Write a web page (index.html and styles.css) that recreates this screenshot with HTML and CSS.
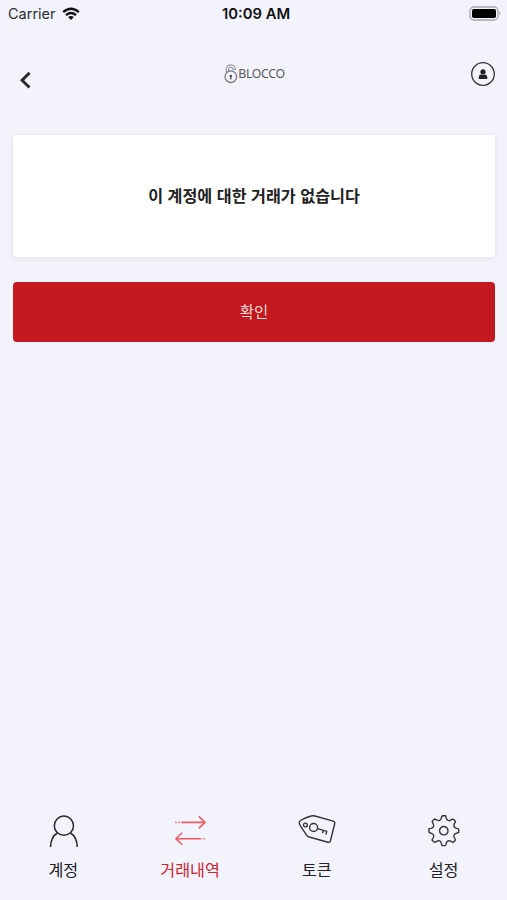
FILE: index.html
```html
<!DOCTYPE html>
<html lang="ko">
<head>
<meta charset="utf-8">
<title>BLOCCO</title>
<link rel="stylesheet" href="styles.css">
</head>
<body>
<div class="app">
  <div class="status">
    <div class="carrier"><span>Carrier</span>
      <svg width="18" height="14" viewBox="0 0 18 14" fill="none" stroke="#111" stroke-width="2.4"><path d="M1.2 5.2Q9-1.6 16.8 5.2M4 8.2Q9 3.9 14 8.2"/><path d="M9 13L6.1 10.1Q9 7.8 11.9 10.1Z" fill="#111" stroke="none"/></svg>
    </div>
    <div class="time">10:09 AM</div>
    <svg class="battery" width="33" height="16" viewBox="0 0 33 16"><rect x="1" y="1" width="28" height="13" rx="3.8" fill="#f3f3fb" stroke="#a5a5aa" stroke-width="1.3"/><rect x="3" y="3" width="24" height="9" rx="1.8" fill="#000"/><path d="M30.5 5.3q2 2.2 0 4.4z" fill="#999"/></svg>
  </div>
  <header class="header">
    <svg class="back" width="14" height="20" viewBox="0 0 14 20" fill="none" stroke="#2b2b2e" stroke-width="3"><path d="M11.5 2.9L4.1 10.2L11.5 17.5"/></svg>
    <div class="logo">
      <svg width="14" height="20" viewBox="0 0 14 20" fill="none" stroke="#77777b" stroke-width="1.3"><circle cx="6.8" cy="12.7" r="5.8"/><path d="M2.3 8.8V4.6Q2.6 .8 6.8 .8Q11 .8 11.4 4.6V5.6H9.2Q9 3.1 6.9 3.1Q4.6 3.2 4.6 5V7.2" stroke-width=".9"/><circle cx="6.8" cy="12.1" r="1.4" fill="#555" stroke="none"/><path d="M6.8 12.1V15.4" stroke="#555"/></svg>
      <span>BLOCCO</span>
    </div>
    <svg class="profile" width="26" height="26" viewBox="0 0 26 26"><circle cx="13" cy="13" r="11.3" fill="none" stroke="#333338" stroke-width="1.3"/><circle cx="13" cy="10.9" r="2.6" fill="#222"/><path d="M8.7 18V16.2Q8.7 13.8 11.2 13.6Q13 14.6 14.8 13.6Q17.3 13.8 17.3 16.2V18Z" fill="#222"/></svg>
  </header>
  <main class="content">
    <section class="card">이 계정에 대한 거래가 없습니다</section>
    <button class="confirm">확인</button>
  </main>
  <nav class="tabs">
    <a class="tab">
      <svg width="40" height="40" viewBox="0 0 40 40" fill="none" stroke="#29292c" stroke-width="1.5"><circle cx="20.9" cy="15.7" r="9.6"/><path d="M7.5 37Q8 26.7 14.3 23M27.5 23Q33.8 26.7 34.3 37"/></svg>
      <span>계정</span>
    </a>
    <a class="tab active">
      <svg width="40" height="40" viewBox="0 0 40 40" fill="none" stroke="#f25b60" stroke-width="1.6"><path d="M12 12.4H35M28.8 6.4L35 12.4L28.8 18.4M30 28.8H6M12.2 22.8L6 28.8L12.2 34.8"/><path d="M5 12.4H12M30 28.8H36.5" stroke-dasharray="2 1.2" opacity=".7"/></svg>
      <span>거래내역</span>
    </a>
    <a class="tab">
      <svg width="40" height="40" viewBox="0 0 40 40" fill="none" stroke="#343438" stroke-width="1.4" stroke-linejoin="round"><path d="M14.2 6Q16 5.5 18 6L36.2 11.2Q38.2 11.8 37.7 13.7L33.4 31Q32.9 32.8 31 32.3L12.2 27Q10.5 26.5 9.4 24.8L3.1 15.3Q1 11.9 4.3 10Q8.5 7.5 14.2 6Z"/><circle cx="8.4" cy="15" r="1.9"/><circle cx="16.6" cy="17.5" r="4"/><path d="M20.5 18.7L29.8 21.4L28.9 24.6M26.3 20.5L25.6 23.1"/></svg>
      <span>토큰</span>
    </a>
    <a class="tab">
      <svg width="40" height="40" viewBox="0 0 40 40" fill="none" stroke="#343438" stroke-width="1.4" stroke-linejoin="round">
        <defs><path id="tooth" d="M-1.8-14.9H1.8L2.6-12.2Q3.7-9.2 6.79-10.47L9.26-11.81"/></defs>
        <g transform="translate(19.8 20.7)"><use href="#tooth"/><use href="#tooth" transform="rotate(45)"/><use href="#tooth" transform="rotate(90)"/><use href="#tooth" transform="rotate(135)"/><use href="#tooth" transform="rotate(180)"/><use href="#tooth" transform="rotate(225)"/><use href="#tooth" transform="rotate(270)"/><use href="#tooth" transform="rotate(315)"/><circle r="4.2"/></g>
      </svg>
      <span>설정</span>
    </a>
  </nav>
</div>
</body>
</html>
```

FILE: styles.css
```css
* { box-sizing: border-box; }
body { margin: 0; background: #f3f3fc; font-family: "Noto Sans CJK KR", sans-serif; color: #222; }
.app { height: 900px; display: flex; flex-direction: column; }
svg { display: block; flex: none; }
.status { height: 28px; padding: 0 5px 0 8px; display: grid; grid-template-columns: 1fr auto 1fr; align-items: center; font: 14.5px/28px Inter, sans-serif; color: #2c2c30; }
.carrier { display: flex; align-items: center; gap: 6px; }
.carrier svg { margin-bottom: 1px; }
.time { padding-left: 2px; font-weight: 600; font-size: 14.8px; color: #111; }
.battery { justify-self: end; margin-bottom: 1px; }
.header { height: 107px; padding: 33px 11px 0 18px; display: grid; grid-template-columns: 1fr auto 1fr; align-items: start; }
.back { margin-top: 9px; }
.logo { display: flex; align-items: center; margin: 3px 5px 0 0; font: 12.3px/20px "Noto Sans", sans-serif; letter-spacing: -.35px; color: #5c5c60; }
.profile { justify-self: end; }
.content { flex: 1; padding: 0 12px 0 13px; }
.card { height: 122px; padding-bottom: 2px; display: flex; align-items: center; justify-content: center; background: #fff; border-radius: 3px; box-shadow: 0 1px 6px rgba(0, 0, 0, .09); font-size: 16.2px; font-weight: 700; }
.confirm { display: block; width: 100%; height: 60px; margin-top: 25px; padding: 0 0 2px; border: 0; border-radius: 4px; background: #c3181d; color: #fbdcdc; font: 15.5px "Noto Sans CJK KR", sans-serif; }
.tabs { height: 90px; display: grid; grid-template-columns: repeat(4, 1fr); }
.tab { display: flex; flex-direction: column; align-items: center; font-size: 16.2px; line-height: 24px; gap: 7px; }
.active { color: #cc2630; }
```
